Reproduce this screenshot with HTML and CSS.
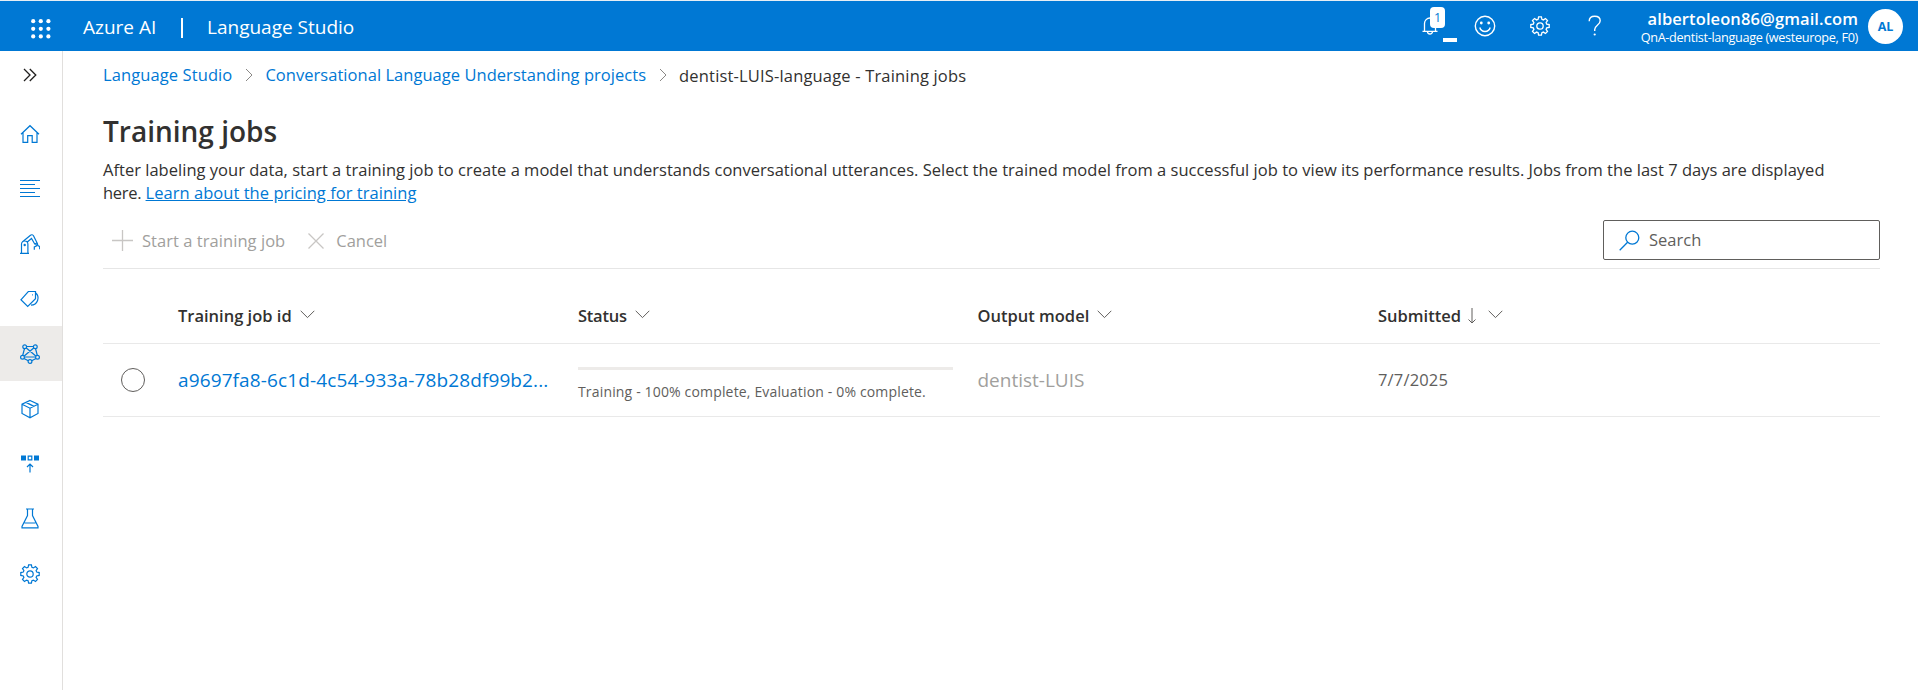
FILE: index.html
```html
<!DOCTYPE html>
<html lang="en">
<head>
<meta charset="utf-8">
<title>Training jobs - Language Studio</title>
<link rel="stylesheet" href="styles.css">
</head>
<body>
<header class="topbar">
  <svg class="waffle" width="20" height="20" viewBox="0 0 20 20" fill="#fff"><circle cx="2.2" cy="2.2" r="2.1"/><circle cx="9.8" cy="2.2" r="2.1"/><circle cx="17.4" cy="2.2" r="2.1"/><circle cx="2.2" cy="9.8" r="2.1"/><circle cx="9.8" cy="9.8" r="2.1"/><circle cx="17.4" cy="9.8" r="2.1"/><circle cx="2.2" cy="17.4" r="2.1"/><circle cx="9.8" cy="17.4" r="2.1"/><circle cx="17.4" cy="17.4" r="2.1"/></svg>
  <span class="brand">Azure AI</span>
  <span class="divider"></span>
  <span class="product">Language Studio</span>
  <div class="actions">
    <div class="bell">
      <svg width="16" height="20" viewBox="0 0 16 20" fill="none" stroke="#fff" stroke-width="1.3"><path d="M.5 15.3h15M2.5 15.3V7.5a5.5 5.5 0 0 1 11 0v7.8M5.5 15.5a2.5 2.5 0 0 0 5 0"/></svg>
      <span class="badge">1</span>
      <span class="dash"></span>
    </div>
    <svg class="smile" width="22" height="22" viewBox="0 0 22 22" fill="none" stroke="#fff" stroke-width="1.4"><circle cx="11" cy="11" r="9.7"/><path d="M5.8 12.5a5.4 5.4 0 0 0 10.4 0"/><g fill="#fff" stroke="none"><circle cx="7.3" cy="8" r="1.4"/><circle cx="14.7" cy="8" r="1.4"/></g></svg>
    <svg class="gear" width="20" height="20" viewBox="0 0 20 20" fill="none" stroke="#fff" stroke-width="1.3"><use href="#gear"/></svg>
    <svg class="help" width="14" height="22" viewBox="0 0 14 22" fill="none" stroke="#fff" stroke-width="1.4"><path d="M1.200 6.300C1.200 3 3.500 1.200 6.700 1.200c3.300 0 5.500 1.800 5.500 4.600 0 4.300-5.500 4.700-5.500 8.700v1.500"/><circle cx="6.700" cy="19.500" r="1.100" fill="#fff" stroke="none"/></svg>
  </div>
  <div class="account"><span class="email">albertoleon86@gmail.com</span><span class="resource">QnA-dentist-language (westeurope, F0)</span></div>
  <span class="avatar">AL</span>
</header>
<div class="shell">
  <nav class="rail">
    <a class="expand"><svg width="14" height="14" viewBox="0 0 14 14"><path d="M1 1l6 6-6 6M6.800 1l6 6-6 6"/></svg></a>
    <a><svg width="20" height="20" viewBox="0 0 20 20"><path d="M1 10.200L10 1.700l9 8.500M3 8.500v9.800h4.700v-6.600h4.500v6.600H17V8.500"/></svg></a>
    <a><svg width="20" height="20" viewBox="0 0 20 20"><path d="M0 1.500h20M0 5.500h15M0 9.500h20M0 13.500h15M0 17.500h20"/></svg></a>
    <a><svg width="20" height="22" viewBox="0 0 20 22"><path d="M0 20.400h9M1.500 20.400V11.200a3.200 3.200 0 0 1 6.400 0v9.200M2.300 9L10.500 2.200a2 2 0 0 1 3 .5L17 9.800M7.300 9l4.200-3.500L15 11.500M14.200 11.300l3.200-1.600M15.800 10.700l.7 2.300-2.200 1v2.800M17.200 9.800l.6 2.700 1.900 1v2.700"/><circle cx="4.700" cy="12" r=".6"/></svg></a>
    <a><svg width="20" height="18" viewBox="0 0 20 18"><path d="M.9 9.800L8.300 1.500H15.500V8.800L7.700 16.400zM15.500 2.700A7.100 7.100 0 0 1 11 15.200M12.200 4.900h.8"/></svg></a>
    <a class="active"><svg width="20" height="20" viewBox="0 0 20 20"><path d="M6.500 2.500h7M4.500 4.500L2.700 11.500M15.500 4.500l1.800 7M6.300 4l9.500 8M13.700 4l-9.500 8M5 13h10M4 14.500l4.300 2.300M16 14.500l-4.300 2.300"/><circle cx="4.700" cy="2.700" r="1.900"/><circle cx="15.300" cy="2.700" r="1.900"/><circle cx="2.500" cy="13.300" r="1.900"/><circle cx="17.500" cy="13.300" r="1.900"/><circle cx="10" cy="17.500" r="1.900"/></svg></a>
    <a><svg width="18" height="20" viewBox="0 0 18 20"><path d="M9 1.500l8 3.700v9.300l-8 4.200-8-4.200V5.200zM1 5.200l8 4 8-4M9 9.200v9.500M5 3.400l8 4"/></svg></a>
    <a><svg width="18" height="18" viewBox="0 0 18 18"><path d="M0 .5h5v5H0zM13 .5h5v5h-5z" fill="#0078d4" stroke="none"/><path d="M7.200 1.200h3.600v3.600H7.200zM9 17.500V9M6 12l3-3 3 3"/></svg></a>
    <a><svg width="18" height="21" viewBox="0 0 18 21"><path d="M5 1h8M6.500 1v6.500L1 18.500v1.300h16v-1.300L11.500 7.500V1M3.500 15h11"/></svg></a>
    <a><svg width="20" height="20" viewBox="0 0 20 20"><g id="gear"><path d="M8.600.8h2.800l.5 2.500 1.500.6 2.100-1.400 2 2-1.400 2.100.6 1.500 2.500.5v2.800l-2.500.5-.6 1.500 1.400 2.100-2 2-2.100-1.400-1.500.6-.5 2.500H8.600l-.5-2.500-1.500-.6-2.100 1.400-2-2 1.400-2.100-.6-1.500L.8 11.400V8.600l2.500-.5.6-1.500-1.400-2.100 2-2 2.100 1.400 1.500-.6z"/><circle cx="10" cy="10" r="3.200"/></g></svg></a>
  </nav>
  <main class="content">
    <div class="crumbs">
      <a class="crumb-home">Language Studio</a>
      <svg width="9" height="14" viewBox="0 0 9 14"><path d="M1 1l6 6-6 6"/></svg>
      <a class="crumb-projects">Conversational Language Understanding projects</a>
      <svg width="9" height="14" viewBox="0 0 9 14"><path d="M1 1l6 6-6 6"/></svg>
      <span class="crumb-current">dentist-LUIS-language - Training jobs</span>
    </div>
    <h1>Training jobs</h1>
    <p class="intro">After labeling your data, start a training job to create a model that understands conversational utterances. Select the trained model from a successful job to view its performance results. Jobs from the last 7 days are displayed<br><span class="here">here.</span> <a class="learn">Learn about the pricing for training</a></p>
    <div class="commands">
      <svg class="plus" width="21" height="21" viewBox="0 0 21 21"><path d="M10.500 0v21M0 10.500h21"/></svg>
      <span class="start">Start a training job</span>
      <svg class="cross" width="16" height="16" viewBox="0 0 16 16"><path d="M.5 .5l15 15M15.500 .5l-15 15"/></svg>
      <span class="cancel">Cancel</span>
      <div class="search"><svg width="21" height="21" viewBox="0 0 21 21"><circle cx="13.300" cy="7.700" r="6.500"/><path d="M8.600 12.300L.7 20.200"/></svg><span>Search</span></div>
    </div>
    <div class="grid head">
      <span></span>
      <div><span>Training job id</span><svg class="chev" width="15" height="9" viewBox="0 0 15 9"><path d="M.7 .8l6.800 6.800L14.300 .8"/></svg></div>
      <div><span class="status">Status</span><svg class="chev" width="15" height="9" viewBox="0 0 15 9"><path d="M.7 .8l6.800 6.800L14.300 .8"/></svg></div>
      <div><span>Output model</span><svg class="chev" width="15" height="9" viewBox="0 0 15 9"><path d="M.7 .8l6.800 6.800L14.300 .8"/></svg></div>
      <div><span>Submitted</span><svg class="sort" width="8" height="16" viewBox="0 0 8 16"><path d="M4 0v15M.5 11.500L4 15l3.500-3.500"/></svg><svg class="chev" width="15" height="9" viewBox="0 0 15 9"><path d="M.7 .8l6.800 6.800L14.300 .8"/></svg></div>
    </div>
    <div class="grid row">
      <span class="radio"></span>
      <div><a class="jobid">a9697fa8-6c1d-4c54-933a-78b28df99b2...</a></div>
      <div class="progress"><span class="track"></span><span class="note">Training - 100% complete, Evaluation - 0% complete.</span></div>
      <div><span class="model">dentist-LUIS</span></div>
      <div><span class="date">7/7/2025</span></div>
    </div>
  </main>
</div>
</body>
</html>
```
FILE: styles.css
```css
* { box-sizing: border-box; }
body { margin: 0; height: 690px; overflow: hidden; background: #fff; color: #323130; font: 16.5px/24px "Open Sans", "Noto Sans", sans-serif; white-space: nowrap; }
a { color: #0078d4; }
svg { flex: none; display: block; }

.topbar { display: flex; align-items: center; height: 51px; border-top: 1px solid #e6eef5; background: #0078d4; color: #fff; padding-right: 15px; }
.waffle { margin: 5px 32px 0 31px; }
.brand, .product { margin-top: 1px; font-size: 19px; }
.brand { width: 75px; }
.divider { width: 2px; height: 20px; background: #fff; margin: 4px 24px 0 23px; }
.actions { display: flex; align-items: center; margin-left: auto; }
.bell { position: relative; margin-right: 36px; }
.badge { position: absolute; left: 8px; top: -9px; width: 15px; height: 21px; border-radius: 4px; background: #fff; color: #0078d4; font-size: 12.5px; line-height: 21px; text-align: center; }
.dash { position: absolute; left: 21px; top: 22px; width: 14px; height: 4px; background: #fff; }
.smile { margin-right: 34px; }
.gear { margin-right: 38px; }
.help { margin-right: 37px; }
.account { display: flex; flex-direction: column; align-items: flex-end; width: 219px; padding-top: 2px; }
.email { font-size: 16.5px; font-weight: 600; line-height: 20px; letter-spacing: .1px; }
.resource { font-size: 12.7px; line-height: 17px; letter-spacing: -.34px; }
.avatar { width: 35px; height: 35px; margin-left: 10px; border-radius: 50%; background: #fff; color: #0078d4; font-size: 12.5px; font-weight: 700; line-height: 35px; text-align: center; }

.shell { display: flex; height: 639px; }
.rail { width: 63px; border-right: 1px solid #e1dfdd; }
.rail a { display: flex; align-items: center; justify-content: center; height: 55px; padding-right: 2px; }
.rail .expand { height: 48px; margin-bottom: 7px; }
.rail .active { background: #edebe9; }
.rail svg { fill: none; stroke: #0078d4; stroke-width: 1.2; }
.rail .expand svg { stroke: #201f1e; stroke-width: 1.3; }

.content { width: 1777px; margin-left: 40px; }
.crumbs { display: flex; align-items: center; height: 48px; }
.crumbs svg { margin: 0 11px 0 13px; fill: none; stroke: #8a8886; }
.crumb-home { letter-spacing: .1px; }
.crumb-projects { letter-spacing: .04px; }
.crumb-current { letter-spacing: .17px; margin-top: 1px; }
h1 { margin: 14px 0 0; font-size: 28px; font-weight: 600; line-height: 36px; }
.intro { margin: 9px 0 0; line-height: 23px; letter-spacing: .016px; }
.here { letter-spacing: -.3px; }
.learn { text-decoration: underline; letter-spacing: .04px; }

.commands { display: flex; align-items: center; height: 56px; margin-top: 9px; border-bottom: 1px solid #e6e6e6; color: #a19f9d; }
.commands svg { fill: none; stroke: #c8c6c4; stroke-width: 1.3; }
.plus { margin: 0 9px; }
.cross { margin: 0 12px 0 23px; }
.start { letter-spacing: .05px; }
.search { display: flex; align-items: center; width: 277px; height: 40px; margin: 0 0 1px auto; padding-left: 15px; border: 1px solid #605e5c; border-radius: 2px; color: #605e5c; }
.search svg { stroke: #0078d4; margin-right: 9px; }

.grid { display: grid; grid-template-columns: 75px 400px 399.5px 400.5px 1fr; align-items: center; border-bottom: 1px solid #e9e9e9; }
.grid > div { display: flex; align-items: center; }
.grid svg { fill: none; stroke: #605e5c; stroke-width: 1; }
.head { height: 75px; padding-top: 19px; font-weight: 600; }
.status { letter-spacing: -.25px; }
.sort { margin-left: 7px; }
.chev { margin: -2px 0 0 8px; }
.sort + .chev { margin-left: 12px; }
.row { height: 73px; }
.radio { width: 24px; height: 24px; margin-left: 18px; border: 1.5px solid #605e5c; border-radius: 50%; }
.jobid { font-size: 19px; letter-spacing: .12px; }
.row .progress { display: block; padding-top: 10px; }
.track { display: block; width: 375px; height: 3px; margin-bottom: 10px; background: #edebe9; }
.note { display: block; font-size: 14px; letter-spacing: .16px; color: #605e5c; }
.model { font-size: 19px; color: #a19f9d; }
.date { color: #605e5c; letter-spacing: .17px; }
```
